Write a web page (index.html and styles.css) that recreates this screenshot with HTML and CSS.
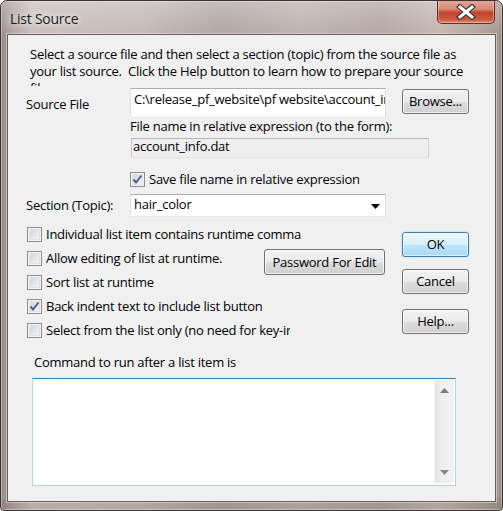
FILE: index.html
```html
<!DOCTYPE html>
<html>
<head>
<meta charset="utf-8">
<title>List Source</title>
<link rel="stylesheet" href="styles.css">
</head>
<body>
<div class="window">
  <div class="titlebar">
    <span class="title">List Source</span>
    <span class="close">
      <svg width="20" height="16" viewBox="0 0 20 16">
        <path d="M4 3 L16 13 M16 3 L4 13" stroke="#3b3b3b" stroke-width="5.5" stroke-linecap="square"/>
        <path d="M4 3 L16 13 M16 3 L4 13" stroke="#ffffff" stroke-width="3" stroke-linecap="square"/>
      </svg>
    </span>
  </div>
  <div class="client">
    <p class="intro">Select a source file and then select a section (topic) from the source file as<br>your list source.&nbsp; Click the Help button to learn how to prepare your source<br>file.</p>

    <div class="source-grid">
      <div class="label label-source">Source File</div>
      <div class="textbox source-box">C:\release_pf_website\pf website\account_info.dat</div>
      <button class="btn browse">Browse...</button>

      <div class="rel-label">File name in relative expression (to the form):</div>
      <div class="readonly-box">account_info.dat</div>

      <div class="check-row save-row">
        <span class="cb checked"><svg width="13" height="13" viewBox="0 0 13 13"><path d="M2.5 6.5 L5 9.5 L10.5 2.5" fill="none" stroke="#4b5e94" stroke-width="2"/></svg></span>
        <span class="cb-text">Save file name in relative expression</span>
      </div>

      <div class="label label-section">Section (Topic):</div>
      <div class="textbox combo">
        <span>hair_color</span>
        <svg class="combo-arrow" width="9" height="5" viewBox="0 0 9 5"><path d="M0 0 H9 L4.5 5 Z" fill="#000"/></svg>
      </div>
    </div>

    <div class="lower">
      <div class="checks">
        <div class="check-row"><span class="cb"></span><span class="cb-text w-individual">Individual list item contains runtime command</span></div>
        <div class="check-row"><span class="cb"></span><span class="cb-text">Allow editing of list at runtime.</span></div>
        <div class="check-row"><span class="cb"></span><span class="cb-text">Sort list at runtime</span></div>
        <div class="check-row"><span class="cb checked"><svg width="13" height="13" viewBox="0 0 13 13"><path d="M2.5 6.5 L5 9.5 L10.5 2.5" fill="none" stroke="#4b5e94" stroke-width="2"/></svg></span><span class="cb-text">Back indent text to include list button</span></div>
        <div class="check-row"><span class="cb"></span><span class="cb-text w-select">Select from the list only (no need for key-in)</span></div>
      </div>
      <div class="middle">
        <button class="btn password">Password For Edit</button>
      </div>
      <div class="actions">
        <button class="btn btn-default ok">OK</button>
        <button class="btn cancel">Cancel</button>
        <button class="btn help">Help...</button>
      </div>
    </div>

    <div class="command-label">Command to run after a list item is</div>
    <div class="memo">
      <div class="memo-text"></div>
      <div class="scrollbar">
        <svg width="9" height="5" viewBox="0 0 9 5"><path d="M0 5 L4.5 0 L9 5 Z" fill="#7d7d7d"/></svg>
        <svg width="9" height="5" viewBox="0 0 9 5"><path d="M0 0 H9 L4.5 5 Z" fill="#8a8a8a"/></svg>
      </div>
    </div>
  </div>
</div>
</body>
</html>
```

FILE: styles.css
```css
html, body {
  margin: 0;
  padding: 0;
  background: #ffffff;
}

body {
  font-family: "Open Sans", "Liberation Sans", sans-serif;
  font-size: 13px;
  line-height: 17px;
  letter-spacing: -0.25px;
  color: #000000;
}

.window {
  width: 503px;
  height: 511px;
  box-sizing: border-box;
  border: 1px solid #3a3333;
  border-radius: 7px 7px 4px 4px;
  padding: 0 6px 8px 6px;
  display: flex;
  flex-direction: column;
  overflow: hidden;
  background:
    linear-gradient(180deg, rgba(255,255,255,0.28) 0px, rgba(255,255,255,0.05) 30px, rgba(255,255,255,0) 34px),
    linear-gradient(180deg, rgba(0,0,0,0) 0px, rgba(0,0,0,0) 495px, rgba(60,50,40,0.12) 500px),
    linear-gradient(90deg, #9b8a8c 0px, #a99a99 7px, #c9bebb 30px, #c2b7b4 140px, #aea3a0 220px, #bcb0ad 300px, #b1a4a0 380px, #c4b4b0 440px, #a8968f 497px, #8c7e72 503px);
  box-shadow: inset 0 0 0 1px rgba(255,255,255,0.35);
}

.titlebar {
  height: 33px;
  margin: 0 -6px;
  padding: 0 7px 0 9px;
  display: flex;
  justify-content: space-between;
  align-items: flex-start;
  flex-shrink: 0;
}

.title {
  padding-top: 9px;
  font-size: 14px;
  line-height: 17px;
  color: #1b1b1b;
  text-shadow: 0 0 6px rgba(255,255,255,0.9), 0 0 10px rgba(255,255,255,0.6);
}

.close {
  margin-top: -1px;
  width: 58px;
  height: 24px;
  box-sizing: border-box;
  border: 1px solid #6a2a22;
  border-top: none;
  border-radius: 0 0 5px 5px;
  background: linear-gradient(180deg, #e8a898 0%, #d98875 40%, #c2422b 55%, #cf5a40 85%, #e08a6e 100%);
  box-shadow: inset 0 0 0 1px rgba(255,255,255,0.35);
  display: flex;
  align-items: center;
  justify-content: center;
}

.client {
  flex: 1;
  border: 1px solid #5f5f5f;
  background: #f0f0f0;
  box-shadow: 0 0 0 1px rgba(255,255,255,0.4);
  display: flex;
  flex-direction: column;
  align-items: flex-start;
}

.intro {
  margin: 11px 0 0 22px;
  height: 40px;
  width: 450px;
  overflow: hidden;
  white-space: nowrap;
}

/* source section */
.source-grid {
  margin: 2px 0 0 18px;
  display: grid;
  grid-template-columns: 104px 256px 16px 67px;
  align-items: start;
}

.label-source {
  padding-top: 8px;
}

.textbox {
  box-sizing: border-box;
  background: #ffffff;
  border: 1px solid;
  border-color: #abadb3 #dbdfe6 #e3e9ef #e2e3ea;
}

.source-box {
  height: 30px;
  padding: 2px 3px 0 3px;
  white-space: nowrap;
  overflow: hidden;
}

.btn {
  box-sizing: border-box;
  border: 1px solid #707070;
  border-radius: 3px;
  background: linear-gradient(180deg, #f2f2f2 0%, #ebebeb 50%, #dddddd 51%, #cfcfcf 100%);
  box-shadow: inset 0 0 0 1px rgba(255,255,255,0.75);
  font-family: inherit;
  font-size: 13px;
  line-height: 17px;
  letter-spacing: inherit;
  color: #000000;
  padding: 0;
  text-align: center;
}

.btn-default {
  border-color: #3c7fb1;
  background: linear-gradient(180deg, #eaf6fd 0%, #d9f0fc 50%, #bee6fd 51%, #a7d9f5 100%);
  box-shadow: inset 0 0 0 1px rgba(255,255,255,0.6), 0 0 2px rgba(60,127,177,0.35);
}

.browse {
  grid-column: 4;
  margin-top: 1px;
  width: 67px;
  height: 25px;
}

.rel-label {
  grid-column: 2 / 5;
}

.readonly-box {
  grid-column: 2 / 5;
  margin: 3px 0 0 1px;
  width: 298px;
  height: 20px;
  box-sizing: border-box;
  border: 1px solid;
  border-color: #b4b4b4 #d6d6d6 #e2e2e2 #c9c9c9;
  background: #eeeeee;
  line-height: 14px;
  padding: 0 1px;
}

.check-row {
  display: flex;
  align-items: center;
  height: 15px;
}

.save-row {
  grid-column: 2 / 5;
  margin-top: 14px;
}

.cb {
  width: 15px;
  height: 15px;
  box-sizing: border-box;
  flex-shrink: 0;
  border: 1px solid #8e8f8f;
  background: linear-gradient(135deg, #cdd0d4 0%, #e6e7e9 55%, #f8f8f8 100%);
  box-shadow: inset 0 0 0 1px #f4f4f4, inset 0 0 0 2px #e0e2e5;
  display: flex;
  align-items: center;
  justify-content: center;
}

.cb-text {
  margin-left: 4px;
  margin-top: -1px;
  flex-shrink: 0;
  white-space: nowrap;
  overflow: hidden;
}

.label-section {
  margin-top: 10px;
}

.combo {
  grid-column: 2;
  margin-top: 7px;
  height: 23px;
  padding: 0 5px 0 3px;
  display: flex;
  align-items: center;
  justify-content: space-between;
}

.combo span {
  margin-top: -2px;
}

.combo-arrow {
  margin-top: 1px;
}

/* lower section */
.lower {
  margin: 10px 0 0 19px;
  display: flex;
  align-items: flex-start;
}

.checks {
  width: 237px;
  display: flex;
  flex-direction: column;
  gap: 9px;
}

.w-individual {
  width: 255px;
}

.w-select {
  width: 244px;
}

.middle {
  margin-top: 22px;
}

.password {
  width: 121px;
  height: 26px;
}

.actions {
  margin-left: 17px;
  display: flex;
  flex-direction: column;
}

.actions .btn {
  width: 67px;
  height: 25px;
}

.ok {
  margin-top: 5px;
}

.cancel {
  margin-top: 12px;
}

.help {
  margin-top: 15px;
}

.command-label {
  margin: 16px 0 0 26px;
}

.memo {
  margin: 7px 0 0 24px;
  width: 424px;
  height: 108px;
  box-sizing: border-box;
  border: 1px solid;
  border-color: #3d7bad #b5d3ea #b5d3ea #b5d3ea;
  background: #ffffff;
  display: flex;
  justify-content: space-between;
  padding: 1px 1px 2px 0;
}

.scrollbar {
  width: 20px;
  box-sizing: border-box;
  border-left: 1px solid #f4f4f4;
  background: linear-gradient(90deg, #e6e6e6 0%, #efefef 40%, #f2f2f2 100%);
  display: flex;
  flex-direction: column;
  justify-content: space-between;
  align-items: center;
  padding: 8px 0 8px 0;
}
```
